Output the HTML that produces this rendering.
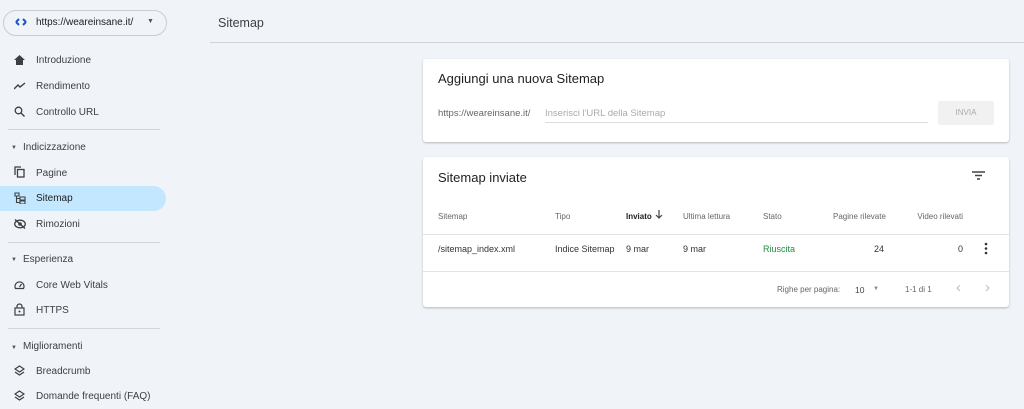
<!DOCTYPE html><html><head><style>
body{margin:0;width:1024px;height:409px;background:#f0f4f8;font-family:"Liberation Sans",sans-serif;position:relative;overflow:hidden;color:#202124}
.a{position:absolute;white-space:nowrap}
.nav{font-size:10px;color:#3c4043}
.sec{font-size:10px;color:#3c4043}
.hr{position:absolute;left:8px;width:152px;height:1px;background:#d3d7db}
.card{position:absolute;background:#fff;border-radius:3px;box-shadow:0 1px 2px rgba(0,0,0,.25)}
.th{font-size:8px;color:#666}
.td{font-size:9px;color:#333}
svg{position:absolute}
</style></head><body>
<div class="a" style="left:3px;top:10px;width:162px;height:24px;border:1px solid #c9cdd2;border-radius:13px"></div>
<svg style="left:15px;top:17px" width="12" height="10" viewBox="0 0 12 10"><path d="M1 5 L4 2 M1 5 L4 8 M11 5 L8 2 M11 5 L8 8" stroke="#1a55c8" stroke-width="2" fill="none"/></svg>
<div class="a" style="left:36px;top:17px;font-size:10px;color:#202124">https://weareinsane.it/</div>
<div class="a" style="left:147px;top:18px;font-size:7px;color:#555">▼</div>
<svg style="left:14px;top:55px" width="11" height="10"><path d="M5.5 0 L11 5 H9 V10 H2 V5 H0Z" fill="#3c4043"/></svg>
<div class="a nav" style="left:36px;top:55px">Introduzione</div>
<svg style="left:14px;top:82px" width="12" height="8"><path d="M0 7 L4 3 L6 5 L11 1" stroke="#3c4043" stroke-width="1.4" fill="none"/></svg>
<div class="a nav" style="left:36px;top:81px">Rendimento</div>
<svg style="left:14px;top:106px" width="11" height="11"><circle cx="4.5" cy="4.5" r="3.3" stroke="#3c4043" stroke-width="1.3" fill="none"/><path d="M7 7 L10.5 10.5" stroke="#3c4043" stroke-width="1.4"/></svg>
<div class="a nav" style="left:36px;top:107px">Controllo URL</div>
<div class="hr" style="top:129px"></div>
<div class="a" style="left:11px;top:145px;font-size:6px;color:#555">▼</div>
<div class="a sec" style="left:23px;top:142px">Indicizzazione</div>
<svg style="left:14px;top:166px" width="11" height="12"><path d="M1 9V1H7" stroke="#3c4043" stroke-width="1.3" fill="none"/><rect x="3.5" y="3.5" width="6.5" height="7.5" stroke="#3c4043" stroke-width="1.3" fill="none"/></svg>
<div class="a nav" style="left:36px;top:168px">Pagine</div>
<div class="a" style="left:0;top:186px;width:166px;height:25px;background:#c2e7ff;border-radius:0 13px 13px 0"></div>
<svg style="left:14px;top:192px" width="12" height="12"><path d="M1 1h4v3H1z M2.5 4V10.5H6 M2.5 6.5H6 M6 5h5v3H6z M6 9h5v3H6z" stroke="#3c4043" stroke-width="1.1" fill="none"/></svg>
<div class="a nav" style="left:36px;top:193px;color:#202124">Sitemap</div>
<svg style="left:14px;top:219px" width="12" height="10"><ellipse cx="6" cy="5" rx="5.3" ry="3.8" stroke="#3c4043" stroke-width="1.3" fill="none"/><circle cx="6" cy="5" r="1.8" fill="#3c4043"/><path d="M1 0.5 L11 9.5" stroke="#3c4043" stroke-width="1.4"/></svg>
<div class="a nav" style="left:36px;top:219px">Rimozioni</div>
<div class="hr" style="top:242px"></div>
<div class="a" style="left:11px;top:257px;font-size:6px;color:#555">▼</div>
<div class="a sec" style="left:23px;top:254px">Esperienza</div>
<svg style="left:14px;top:280px" width="11" height="10"><path d="M1.5 8.5A4.5 4.5 0 1 1 9.5 8.5Z" stroke="#3c4043" stroke-width="1.2" fill="none"/><path d="M5.5 7 L7.5 4" stroke="#3c4043" stroke-width="1.2"/></svg>
<div class="a nav" style="left:36px;top:280px">Core Web Vitals</div>
<svg style="left:14px;top:303px" width="11" height="13"><path d="M3 5V3.5a2.5 2.5 0 0 1 5 0V5" stroke="#3c4043" stroke-width="1.2" fill="none"/><rect x="1" y="5" width="9" height="7" stroke="#3c4043" stroke-width="1.2" fill="none"/><circle cx="5.5" cy="8.5" r="1" fill="#3c4043"/></svg>
<div class="a nav" style="left:36px;top:305px">HTTPS</div>
<div class="hr" style="top:328px"></div>
<div class="a" style="left:11px;top:345px;font-size:6px;color:#555">▼</div>
<div class="a sec" style="left:23px;top:341px">Miglioramenti</div>
<svg style="left:14px;top:365px" width="11" height="12"><path d="M5.5 1L10 4L5.5 7L1 4Z M1 7L5.5 10L10 7" stroke="#3c4043" stroke-width="1.2" fill="none"/></svg>
<div class="a nav" style="left:36px;top:366px">Breadcrumb</div>
<svg style="left:14px;top:390px" width="11" height="12"><path d="M5.5 1L10 4L5.5 7L1 4Z M1 7L5.5 10L10 7" stroke="#3c4043" stroke-width="1.2" fill="none"/></svg>
<div class="a nav" style="left:36px;top:391px">Domande frequenti (FAQ)</div>

<div class="a" style="left:218px;top:16px;font-size:12.5px;color:#3c4043">Sitemap</div>
<div class="a" style="left:210px;top:42px;width:814px;height:1px;background:#cdd2d7"></div>

<div class="card" style="left:423px;top:59px;width:586px;height:83px"></div>
<div class="a" style="left:438px;top:71px;font-size:13px;color:#222">Aggiungi una nuova Sitemap</div>
<div class="a" style="left:438px;top:108px;font-size:9.5px;color:#666">https://weareinsane.it/</div>
<div class="a" style="left:545px;top:108px;font-size:9.5px;color:#aaa">Inserisci l'URL della Sitemap</div>
<div class="a" style="left:545px;top:122px;width:383px;height:1px;background:#ddd"></div>
<div class="a" style="left:938px;top:101px;width:56px;height:24px;background:#f1f1f1;border-radius:2px;font-size:8px;color:#aaa;text-align:center;line-height:24px">INVIA</div>

<div class="card" style="left:423px;top:157px;width:586px;height:150px"></div>
<div class="a" style="left:438px;top:170px;font-size:13px;color:#222">Sitemap inviate</div>
<svg style="left:972px;top:171px" width="13" height="9"><path d="M0 1H13M3 4.5H10M5 8H8" stroke="#444" stroke-width="1.4"/></svg>
<div class="a th" style="left:438px;top:212px">Sitemap</div>
<div class="a th" style="left:555px;top:212px">Tipo</div>
<div class="a th" style="left:626px;top:212px;color:#222;font-weight:bold">Inviato</div>
<svg style="left:655px;top:210px" width="8" height="10"><path d="M4 0V8M1 5L4 8L7 5" stroke="#444" stroke-width="1.2" fill="none"/></svg>
<div class="a th" style="left:683px;top:212px">Ultima lettura</div>
<div class="a th" style="left:763px;top:212px">Stato</div>
<div class="a th" style="left:833px;top:212px">Pagine rilevate</div>
<div class="a th" style="left:893px;top:212px;width:70px;text-align:right">Video rilevati</div>
<div class="a" style="left:423px;top:234px;width:586px;height:1px;background:#e3e3e3"></div>
<div class="a td" style="left:438px;top:244px">/sitemap_index.xml</div>
<div class="a td" style="left:555px;top:244px">Indice Sitemap</div>
<div class="a td" style="left:626px;top:244px">9 mar</div>
<div class="a td" style="left:683px;top:244px">9 mar</div>
<div class="a td" style="left:763px;top:244px;color:#1e8e3e">Riuscita</div>
<div class="a td" style="left:844px;top:244px;width:40px;text-align:right">24</div>
<div class="a td" style="left:923px;top:244px;width:40px;text-align:right">0</div>
<svg style="left:984px;top:242px" width="4" height="13"><circle cx="2" cy="2" r="1.3" fill="#333"/><circle cx="2" cy="6.5" r="1.3" fill="#333"/><circle cx="2" cy="11" r="1.3" fill="#333"/></svg>
<div class="a" style="left:423px;top:271px;width:586px;height:1px;background:#e3e3e3"></div>
<div class="a th" style="left:777px;top:285px">Righe per pagina:</div>
<div class="a th" style="left:855px;top:285px;color:#444;font-size:8.5px">10</div>
<div class="a" style="left:873px;top:286px;font-size:6px;color:#888">▼</div>
<div class="a th" style="left:905px;top:285px">1-1 di 1</div>
<div class="a" style="left:956px;top:279px;font-size:15px;color:#bbb">‹</div>
<div class="a" style="left:985px;top:279px;font-size:15px;color:#bbb">›</div>
</body></html>
